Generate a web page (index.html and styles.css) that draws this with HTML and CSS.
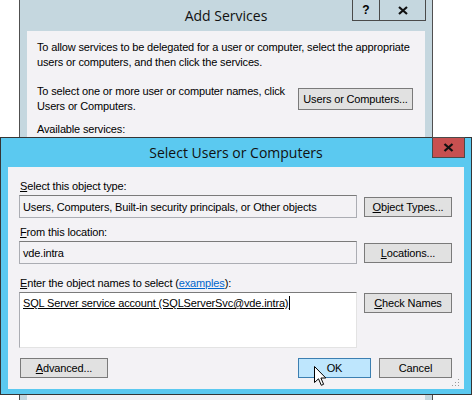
FILE: index.html
```html
<!DOCTYPE html>
<html>
<head>
<meta charset="utf-8">
<link rel="stylesheet" href="styles.css">
</head>
<body>
<div class="desk">
  <div class="win win-back">
    <div class="titlebar back-title">
      <span class="title">Add Services</span>
      <div class="tb-buttons">
        <span class="tb-btn tb-help">?</span>
        <span class="tb-btn tb-close">
          <svg width="10" height="9" viewBox="0 0 10 9"><path d="M1 1 L9 8 M9 1 L1 8" stroke="#111" stroke-width="2.2" fill="none"/></svg>
        </span>
      </div>
    </div>
    <div class="back-content">
      <p class="para">To allow services to be delegated for a user or computer, select the appropriate<br>users or computers, and then click the services.</p>
      <div class="para-row">
        <p class="para">To select one or more user or computer names, click<br>Users or Computers.</p>
        <span class="btn btn-users">Users or Computers...</span>
      </div>
      <p class="para avail">Available services:</p>
    </div>
  </div>

  <div class="win win-front">
    <div class="titlebar front-title">
      <span class="title">Select Users or Computers</span>
      <span class="close-red">
        <svg width="11" height="9" viewBox="0 0 11 9"><path d="M1.5 1 L9.5 8 M9.5 1 L1.5 8" stroke="#111" stroke-width="2.3" fill="none"/></svg>
      </span>
    </div>
    <div class="front-content">
      <div class="form">
        <div class="label l1"><u>S</u>elect this object type:</div>
        <div class="label-spacer"></div>
        <div class="field ro">Users, Computers, Built-in security principals, or Other objects</div>
        <span class="btn"><u>O</u>bject Types...</span>

        <div class="label l2"><u>F</u>rom this location:</div>
        <div class="label-spacer"></div>
        <div class="field ro">vde.intra</div>
        <span class="btn"><u>L</u>ocations...</span>

        <div class="label l3"><u>E</u>nter the object names to select (<span class="link">examples</span>):</div>
        <div class="label-spacer"></div>
        <div class="field area"><span class="entered">SQL Server service account (SQLServerSvc@vde.intra)</span><span class="caret"></span></div>
        <span class="btn btn-top"><u>C</u>heck Names</span>
      </div>
      <div class="footer">
        <span class="btn btn-adv"><u>A</u>dvanced...</span>
        <div class="footer-right">
          <span class="btn btn-ok">OK</span>
          <span class="btn btn-cancel">Cancel</span>
        </div>
      </div>
      <svg class="grip" width="8" height="8" viewBox="0 0 8 8">
        <rect x="6" y="0" width="1" height="1" fill="#9a9a9a"/>
        <rect x="3" y="3" width="1" height="1" fill="#9a9a9a"/>
        <rect x="6" y="3" width="1" height="1" fill="#9a9a9a"/>
        <rect x="0" y="6" width="1" height="1" fill="#9a9a9a"/>
        <rect x="3" y="6" width="1" height="1" fill="#9a9a9a"/>
        <rect x="6" y="6" width="1" height="1" fill="#9a9a9a"/>
      </svg>
    </div>
  </div>

  <svg class="pointer" width="13" height="21" viewBox="0 0 13 21">
    <path d="M0.5 0.5 L0.5 16.5 L4.5 12.8 L7.3 19.3 L9.6 18.3 L6.9 12 L11.8 12 Z" fill="#fff" stroke="#000" stroke-width="1" stroke-linejoin="miter"/>
  </svg>
</div>
</body>
</html>
```

FILE: styles.css
```css
* { box-sizing: border-box; }
html, body { margin: 0; padding: 0; background: #fff; }
body { font-family: "Liberation Sans", Arial, sans-serif; font-size: 11px; letter-spacing: -0.15px; color: #000; }
.desk { position: relative; width: 472px; height: 400px; overflow: hidden; }

.win { position: absolute; display: flex; flex-direction: column; }
.win-back {
  left: 19px; top: -1px; width: 414px; height: 430px;
  border: 1px solid #505050; background: #c5d7df;
}
.win-front {
  left: 0; top: 137px; width: 472px; height: 258px;
  border: 1px solid #353535; background: #5bc9f0;
}

.titlebar { position: relative; display: flex; align-items: center; justify-content: center; flex: none; }
.title { font-family: "Open Sans", sans-serif; font-size: 14px; letter-spacing: 0; color: #111; }
.back-title { height: 31px; }
.front-title { height: 29px; }

.tb-buttons { position: absolute; top: 0; right: 6px; display: flex; }
.tb-btn {
  height: 21px; display: flex; align-items: center; justify-content: center;
  border: 1px solid #4a4a4a; border-top: none;
}
.tb-help { width: 28px; font-weight: bold; font-size: 12px; letter-spacing: 0; }
.tb-close { width: 46px; border-left: none; }

.close-red {
  position: absolute; top: -1px; right: 6px; width: 33px; height: 21px;
  background: #c75050; border: 1px solid #4a4a4a;
  display: flex; align-items: center; justify-content: center;
}

.back-content {
  flex: 1; margin: 0 7px; background: #f3f2f5;
  padding: 9px 12px 0 10px;
}
.para { margin: 0; line-height: 15px; white-space: nowrap; }
.para-row { display: flex; justify-content: space-between; align-items: flex-start; margin-top: 14px; }
.avail { margin-top: 8px; }

.btn {
  display: flex; align-items: center; justify-content: center;
  height: 20px; background: #e1e1e1; border: 1px solid #7a7a7a;
  white-space: nowrap;
}
.btn-users { width: 115px; height: 22px; margin-top: 4px; }

.front-content {
  position: relative; flex: 1; margin: 0 7px 5px; background: #f3f2f5;
  padding: 11px 11px 0 11px;
}
.form {
  display: grid; grid-template-columns: 338px 88px; column-gap: 7px; align-items: center;
}
.label { line-height: 17px; padding-left: 1px; }
.l2 { margin-top: 6px; }
.l3 { margin-top: 11px; }
.field {
  height: 23px; border: 1px solid #abadb3; border-top-color: #7a7a7a;
  padding: 0 3px; display: flex; align-items: center; white-space: nowrap; overflow: hidden;
}
.ro { background: #f3f2f5; }
.area { height: 56px; background: #fff; align-items: flex-start; padding-top: 3px; border-color: #e3e3e3; border-top-color: #7a7a7a; border-left-color: #abadb3; }
.entered { text-decoration: underline; line-height: 14px; }
.caret { display: inline-block; width: 1px; height: 14px; background: #000; margin-left: 1px; }
.btn-top { align-self: start; margin-top: 1px; }
.link { color: #0066cc; text-decoration: underline; }

.footer { display: flex; justify-content: space-between; margin-top: 10px; width: 433px; }
.btn-adv { width: 88px; margin-left: 1px; }
.footer-right { display: flex; gap: 8px; }
.btn-ok { width: 73px; background: #bee6fd; border-color: #3c7fb1; }
.btn-cancel { width: 73px; }

.grip { position: absolute; right: 4px; bottom: 2px; }
.pointer { position: absolute; left: 314px; top: 366px; }
```
